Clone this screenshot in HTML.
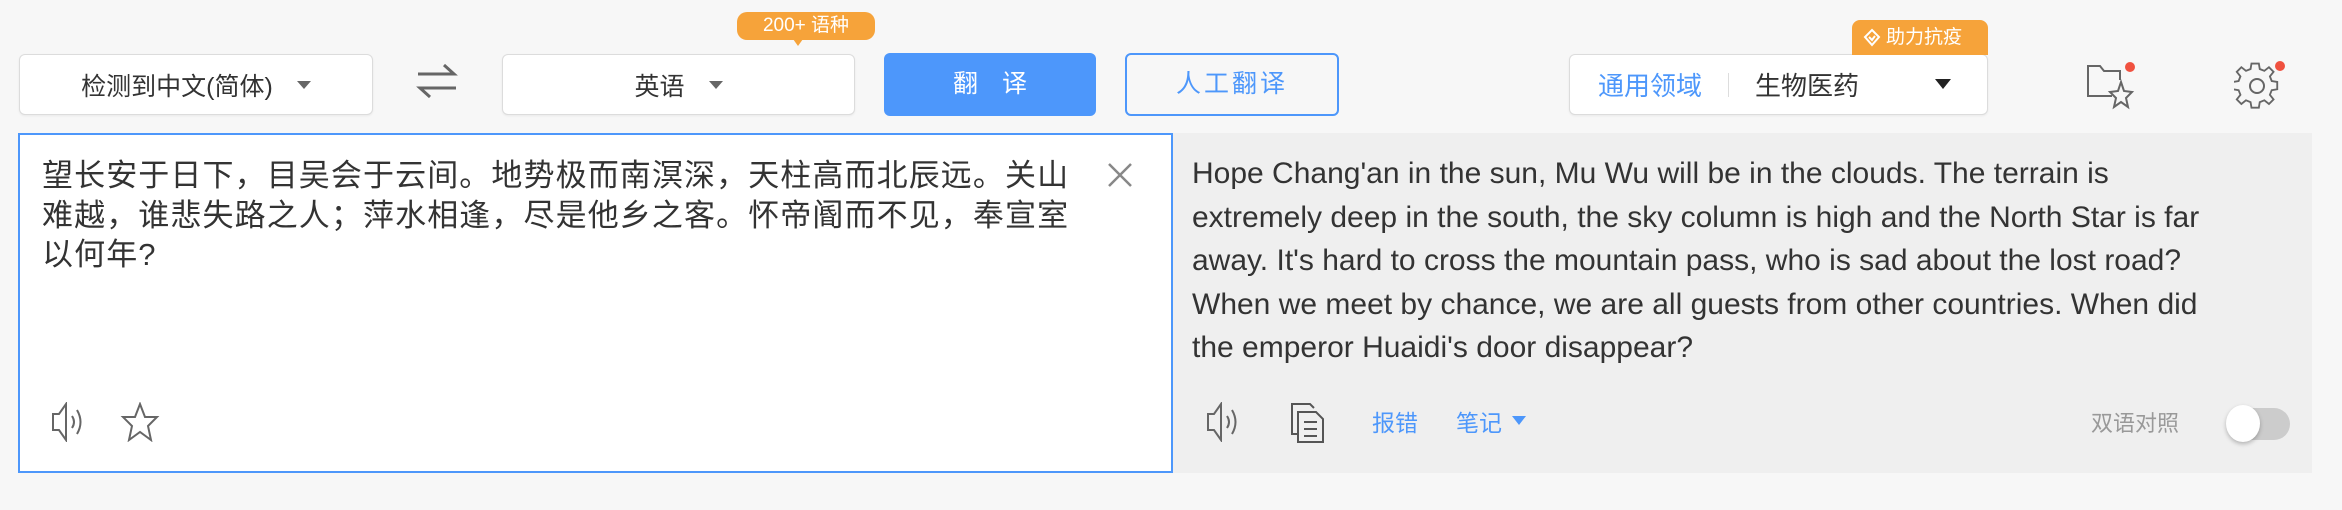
<!DOCTYPE html>
<html><head><meta charset="utf-8"><style>
*{margin:0;padding:0;box-sizing:border-box}
body{width:2342px;height:510px;background:#f7f7f7;font-family:"Liberation Sans","Noto Sans CJK SC",sans-serif;position:relative;overflow:hidden;color:#333}
.a{position:absolute}
.sel{position:absolute;top:54px;height:61px;background:#fff;border:1px solid #dcdcdc;border-radius:6px;font-size:25px;color:#333;display:flex;align-items:center;justify-content:center;box-shadow:0 1px 2px rgba(0,0,0,.06)}
.tri{display:inline-block;width:0;height:0;border-left:7px solid transparent;border-right:7px solid transparent;border-top:8px solid #666;margin-left:24px}
</style></head><body>
<div class="sel" style="left:19px;width:354px">检测到中文(简体)<span class="tri"></span></div>
<svg class="a" style="left:414px;top:60px" width="46" height="42" viewBox="0 0 46 42"><path d="M4 14H40L30 5M42 28H6L16 37" fill="none" stroke="#666" stroke-width="3"/></svg>
<div class="sel" style="left:502px;width:353px">英语<span class="tri"></span></div>
<div class="a" style="left:737px;top:12px;width:138px;height:28px;background:#f6a33a;border-radius:10px;color:#fff;font-size:19px;text-align:center;line-height:28px">200+ 语种</div>
<div class="a" style="left:793px;top:39px;width:0;height:0;border-left:5px solid transparent;border-right:5px solid transparent;border-top:7px solid #f6a33a"></div>
<div class="a" style="left:884px;top:53px;width:212px;height:63px;background:#4d97fb;border-radius:6px;color:#fff;font-size:25px;text-align:center;line-height:63px;letter-spacing:24px;text-indent:24px">翻译</div>
<div class="a" style="left:1125px;top:53px;width:214px;height:63px;border:2px solid #4d97fb;border-radius:6px;color:#4d97fb;font-size:25px;text-align:center;line-height:59px;letter-spacing:3px">人工翻译</div>
<div class="sel" style="left:1569px;width:419px;justify-content:flex-start;padding-left:28px;font-size:26px"><span style="color:#4d97fb">通用领域</span><span style="width:1px;height:24px;background:#ddd;margin:0 26px"></span><span>生物医药</span><span style="position:absolute;right:36px;top:24px;border-left:8px solid transparent;border-right:8px solid transparent;border-top:10px solid #222"></span></div>
<div class="a" style="left:1852px;top:20px;width:136px;height:35px;background:#f6a33a;border-radius:8px 8px 0 0;color:#fff;font-size:19px;line-height:35px;padding-left:34px">助力抗疫</div>
<svg class="a" style="left:1862px;top:28px" width="20" height="20" viewBox="0 0 20 20"><path d="M10 2L17 9L10 17L3 9Z M7 9L10 12L13 8" fill="none" stroke="#fff" stroke-width="2"/></svg>
<svg class="a" style="left:2084px;top:60px" width="56" height="50" viewBox="0 0 56 50"><path d="M28 36H4V6H16L20 11H36V20" fill="none" stroke="#666" stroke-width="2"/><path d="M37 22L40 31L48 32L42 38L44 47L37 42L30 47L32 38L26 32L34 31Z" fill="none" stroke="#666" stroke-width="2"/><circle cx="46" cy="7" r="5" fill="#f0513f"/></svg>
<svg class="a" style="left:2234px;top:60px" width="56" height="50" viewBox="0 0 56 50"><path d="M19 6h8l1 6 5 2 5-4 5 5-4 5 2 5 6 1v8l-6 1-2 5 4 5-5 5-5-4-5 2-1 6h-8l-1-6-5-2-5 4-5-5 4-5-2-5-6-1v-8l6-1 2-5-4-5 5-5 5 4 5-2z" transform="translate(0,-2) scale(.92)" fill="none" stroke="#666" stroke-width="2"/><circle cx="23" cy="26" r="7" fill="none" stroke="#666" stroke-width="2"/><circle cx="46" cy="6" r="5" fill="#f0513f"/></svg>
<div class="a" style="left:18px;top:133px;width:1155px;height:340px;background:#fff;border:2px solid #4d97fb"></div>
<div class="a" style="left:1173px;top:133px;width:1139px;height:340px;background:#efefef"></div>
<div class="a" style="left:42px;top:156px;font-size:31px;line-height:39.5px;color:#333;white-space:nowrap;letter-spacing:1.1px">望长安于日下，目吴会于云间。地势极而南溟深，天柱高而北辰远。关山<br>难越，谁悲失路之人；萍水相逢，尽是他乡之客。怀帝阍而不见，奉宣室<br>以何年?</div>
<svg class="a" style="left:1106px;top:161px" width="28" height="28" viewBox="0 0 28 28"><path d="M3 3L25 25M25 3L3 25" stroke="#888" stroke-width="2.5"/></svg>
<svg class="a" style="left:50px;top:402px" width="44" height="40" viewBox="0 0 44 40"><path d="M3 12H9L16 2V38L9 28H3Z" fill="none" stroke="#666" stroke-width="2"/><path d="M22 14Q26 20 22 26M27 8Q34 20 27 32" fill="none" stroke="#666" stroke-width="2"/></svg>
<svg class="a" style="left:120px;top:402px" width="40" height="40" viewBox="0 0 40 40"><path d="M20 2L25 15L37 15L28 24L31 38L20 30L9 38L12 24L3 15L15 15Z" fill="none" stroke="#666" stroke-width="2"/></svg>
<div class="a" style="left:1192px;top:152px;font-size:30px;line-height:43.5px;color:#333;white-space:nowrap">Hope Chang'an in the sun, Mu Wu will be in the clouds. The terrain is<br>extremely deep in the south, the sky column is high and the North Star is far<br>away. It's hard to cross the mountain pass, who is sad about the lost road?<br>When we meet by chance, we are all guests from other countries. When did<br>the emperor Huaidi's door disappear?</div>
<svg class="a" style="left:1205px;top:402px" width="44" height="40" viewBox="0 0 44 40"><path d="M3 12H9L16 2V38L9 28H3Z" fill="none" stroke="#666" stroke-width="2"/><path d="M22 14Q26 20 22 26M27 8Q34 20 27 32" fill="none" stroke="#666" stroke-width="2"/></svg>
<svg class="a" style="left:1290px;top:402px" width="36" height="42" viewBox="0 0 36 42"><path d="M8 32H2V2H20L24 6" fill="none" stroke="#555" stroke-width="2"/><path d="M8 10H26L33 17V40H8Z M14 20H27M14 27H27M14 34H27" fill="none" stroke="#555" stroke-width="2"/></svg>
<div class="a" style="left:1372px;top:404px;font-size:23px;color:#4d97fb">报错</div>
<div class="a" style="left:1456px;top:404px;font-size:23px;color:#4d97fb">笔记</div>
<div class="a" style="left:1512px;top:416px;border-left:7px solid transparent;border-right:7px solid transparent;border-top:9px solid #4d97fb"></div>
<div class="a" style="left:2091px;top:406px;font-size:22px;color:#999">双语对照</div>
<div class="a" style="left:2228px;top:408px;width:62px;height:32px;background:#ccc;border-radius:16px"></div>
<div class="a" style="left:2226px;top:405px;width:34px;height:37px;background:#fff;border-radius:50%;box-shadow:0 2px 4px rgba(0,0,0,.25)"></div>
</body></html>
